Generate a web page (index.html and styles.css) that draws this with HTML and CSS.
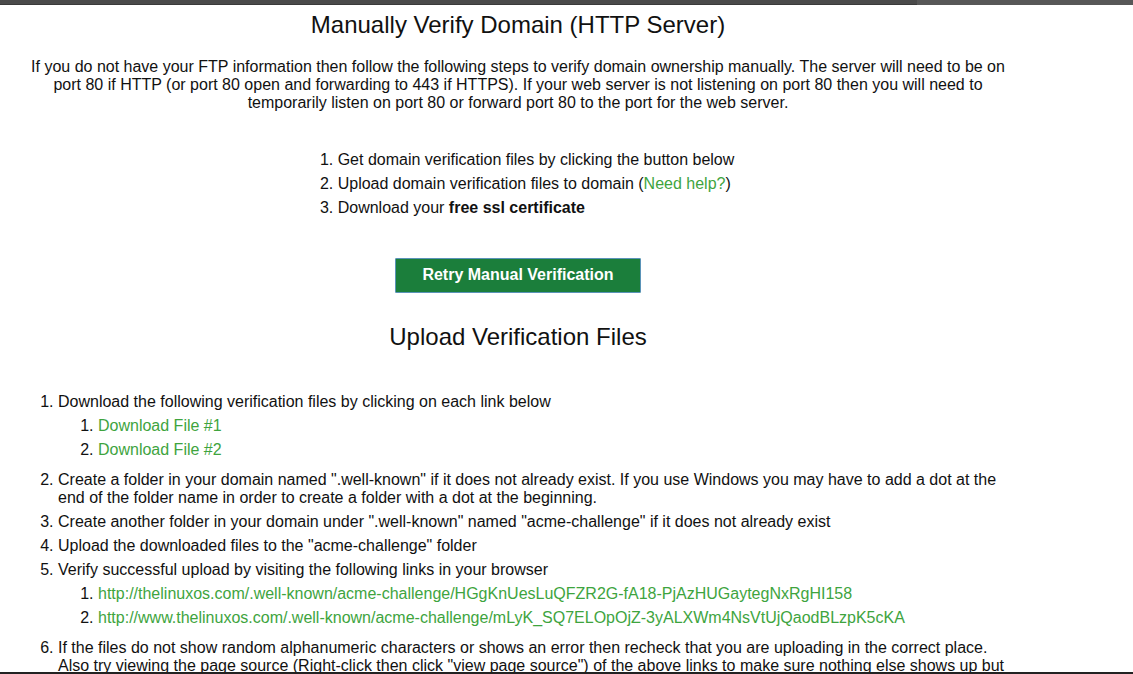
FILE: index.html
```html
<!DOCTYPE html>
<html>
<head>
<meta charset="utf-8">
<link rel="stylesheet" href="styles.css">
</head>
<body>
<div class="topbar"><div class="topbar-left"></div></div>
<div class="page">
  <h1 class="title">Manually Verify Domain (HTTP Server)</h1>
  <p class="intro">If you do not have your FTP information then follow the following steps to verify domain ownership manually. The server will need to be on port 80 if HTTP (or port 80 open and forwarding to 443 if HTTPS). If your web server is not listening on port 80 then you will need to temporarily listen on port 80 or forward port 80 to the port for the web server.</p>
  <div class="center">
    <ol class="steps">
      <li>Get domain verification files by clicking the button below</li>
      <li>Upload domain verification files to domain (<a href="#" class="link">Need help?</a>)</li>
      <li>Download your <b>free ssl certificate</b></li>
    </ol>
  </div>
  <div class="center">
    <button class="btn">Retry Manual Verification</button>
  </div>
  <h2 class="title title2">Upload Verification Files</h2>
  <ol class="list">
    <li>Download the following verification files by clicking on each link below
      <ol class="sub">
        <li><a href="#" class="link">Download File #1</a></li>
        <li><a href="#" class="link">Download File #2</a></li>
      </ol>
    </li>
    <li>Create a folder in your domain named ".well-known" if it does not already exist. If you use Windows you may have to add a dot at the end of the folder name in order to create a folder with a dot at the beginning.</li>
    <li>Create another folder in your domain under ".well-known" named "acme-challenge" if it does not already exist</li>
    <li>Upload the downloaded files to the "acme-challenge" folder</li>
    <li>Verify successful upload by visiting the following links in your browser
      <ol class="sub">
        <li><a href="#" class="link">http://thelinuxos.com/.well-known/acme-challenge/HGgKnUesLuQFZR2G-fA18-PjAzHUGaytegNxRgHI158</a></li>
        <li><a href="#" class="link">http://www.thelinuxos.com/.well-known/acme-challenge/mLyK_SQ7ELOpOjZ-3yALXWm4NsVtUjQaodBLzpK5cKA</a></li>
      </ol>
    </li>
    <li>If the files do not show random alphanumeric characters or shows an error then recheck that you are uploading in the correct place. Also try viewing the page source (Right-click then click "view page source") of the above links to make sure nothing else shows up but the random alphanumeric characters.</li>
  </ol>
</div>
<div class="bottomline"></div>
</body>
</html>
```

FILE: styles.css
```css
html, body {
  margin: 0;
  padding: 0;
  background: #ffffff;
  overflow: hidden;
}
body {
  font-family: "Liberation Sans", Arial, sans-serif;
  font-size: 16px;
  line-height: 18px;
  color: #111111;
}
.topbar {
  height: 5px;
  background: #575757;
  display: flex;
}
.topbar-left {
  width: 917px;
  height: 4px;
  background: #4a4a4a;
  border-bottom: 1px solid #3a3a3a;
}
.page {
  width: 1000px;
  margin-left: 18px;
}
.title {
  font-size: 24px;
  font-weight: normal;
  line-height: 28px;
  text-align: center;
  margin: 6px 0 0 0;
  color: #111;
}
.intro {
  text-align: center;
  margin: 19px 0 0 0;
  padding: 0 4px;
}
.center {
  text-align: center;
}
.steps {
  display: inline-block;
  text-align: left;
  margin: 39px 0 0 0;
  padding-left: 36px;
}
.steps li {
  margin-bottom: 6px;
}
.steps li:last-child {
  margin-bottom: 0;
}
.btn {
  margin-top: 41px;
  font-family: "Liberation Sans", Arial, sans-serif;
  font-size: 16px;
  font-weight: bold;
  line-height: 18px;
  color: #ffffff;
  background: #1b7e3b;
  border: 1px solid #5a93b8;
  border-radius: 1px;
  padding: 7px 26px 8px;
  white-space: nowrap;
}
.title2 {
  margin-top: 30px;
}
.link {
  color: #3ea43e;
  text-decoration: none;
}
.list {
  margin: 42px 0 0 0;
  padding-left: 40px;
}
.list > li {
  margin-bottom: 6px;
}
.sub {
  margin: 6px 0 12px 0;
  padding-left: 40px;
}
.sub li {
  margin-bottom: 6px;
}
.sub li:last-child {
  margin-bottom: 0;
}
.bottomline {
  position: fixed;
  left: 0;
  right: 0;
  bottom: 0;
  height: 2px;
  background: #222222;
}
```
